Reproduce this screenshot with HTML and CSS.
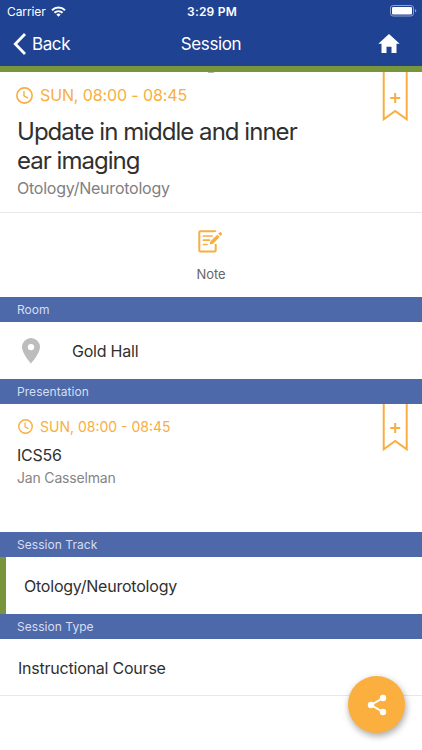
FILE: index.html
```html
<!DOCTYPE html>
<html lang="en">
<head>
  <meta charset="UTF-8">
  <meta name="viewport" content="width=device-width, initial-scale=1.0">
  <title>Session</title>
  <link rel="stylesheet" href="styles.css">
</head>
<body>
  <header class="header">
    <div class="status-bar">
      <div class="carrier">
        <span class="carrier-name">Carrier</span>
        <svg width="15" height="11" viewBox="0 0 15 11" fill="none" stroke="#fff" stroke-width="2">
          <path d="M1 4.2a9.4 9.4 0 0 1 13 0M3.4 6.8a6 6 0 0 1 8.2 0"/>
          <path d="M7.5 10.8L5.3 8.6a3.2 3.2 0 0 1 4.4 0z" fill="#fff" stroke="none"/>
        </svg>
      </div>
      <span class="clock">3:29 PM</span>
      <svg class="battery" width="27" height="12" viewBox="0 0 27 12">
        <rect x=".5" y=".5" width="23" height="10.5" rx="2.6" fill="none" stroke="#8fa1cd"/>
        <rect x="2" y="2" width="20" height="7.5" rx="1.2" fill="#fff"/>
        <path d="M25 4v3.6q1.3-.6 1.3-1.8T25 4z" fill="#8fa1cd"/>
      </svg>
    </div>
    <nav class="nav-bar">
      <a class="back">
        <svg width="14" height="22" viewBox="0 0 14 22" fill="none" stroke="#fff" stroke-width="2.8">
          <path d="M12 1L2.3 11 12 21"/>
        </svg>
        <span class="back-label">Back</span>
      </a>
      <span class="nav-title">Session</span>
      <svg class="home" width="22" height="19" viewBox="0 0 22 19" fill="#fff">
        <path d="M11 0l10.7 9.8h-3.2V19h-5v-6.3h-5V19h-5V9.8H.3z"/>
      </svg>
    </nav>
  </header>

  <main>
    <section class="session">
      <div class="time">
        <svg class="time-icon" viewBox="0 0 16 16" fill="none" stroke="#f8ae40" stroke-width="1.5">
          <circle cx="8" cy="8" r="7.2"/>
          <path d="M7.5 3.7v4.6l3.8 2.2" stroke-width="1.3"/>
        </svg>
        <span class="time-text">SUN, 08:00 - 08:45</span>
      </div>
      <h1 class="session-title">Update in middle and inner<br>ear imaging</h1>
      <p class="session-track">Otology/Neurotology</p>
      <svg class="bookmark" width="26" height="50" viewBox="0 0 26 50" fill="none" stroke="#f8ae40" stroke-width="2">
        <path d="M1.7 -2v49.4L13.2 39l11.5 8.4V-2M8.2 26h10M13.2 21v10"/>
      </svg>
    </section>

    <section class="note">
      <svg class="note-icon" width="25" height="23" viewBox="0 0 25 23" fill="none" stroke="#f8ae40" stroke-width="2">
        <path d="M17.5 2.1V2q0-.7-.8-.7H2.3q-1 0-1 1v18.2q0 1 1 1h14.4q1 0 1-1V14"/>
        <path d="M4.7 6h10M4.7 10.2h7.5M4.7 14.5h5" stroke-width="1.7"/>
        <path d="M11.6 14.5l1-3.6L19.3 4.7l2.4 2.4-6.5 6.6z" fill="#f8ae40" stroke="none"/>
        <path d="M20.2 3.8l1.3-1.3q.9-.8 1.7 0l.5.5q.8.9 0 1.7l-1.2 1.3z" fill="#f8ae40" stroke="none"/>
      </svg>
      <span class="note-label">Note</span>
    </section>

    <h2 class="bar">Room</h2>
    <div class="row room">
      <svg class="pin" width="18" height="26" viewBox="0 0 18 26">
        <path fill="#bdbdbd" fill-rule="evenodd" d="M9 0a9 9 0 0 0-9 9c0 6.5 9 16.5 9 16.5S18 15.5 18 9a9 9 0 0 0-9-9zm0 5.9a3.2 3.2 0 1 1 0 6.4 3.2 3.2 0 0 1 0-6.4z"/>
      </svg>
      <span class="room-name">Gold Hall</span>
    </div>

    <h2 class="bar">Presentation</h2>
    <section class="presentation">
      <div class="time time-small">
        <svg class="time-icon" viewBox="0 0 16 16" fill="none" stroke="#f8ae40" stroke-width="1.5">
          <circle cx="8" cy="8" r="7.2"/>
          <path d="M7.5 3.7v4.6l3.8 2.2" stroke-width="1.3"/>
        </svg>
        <span class="time-text">SUN, 08:00 - 08:45</span>
      </div>
      <h3 class="presentation-title">ICS56</h3>
      <p class="speaker">Jan Casselman</p>
      <svg class="bookmark bookmark-low" width="26" height="50" viewBox="0 0 26 50" fill="none" stroke="#f8ae40" stroke-width="2">
        <path d="M1.7 -2v49.4L13.2 39l11.5 8.4V-2M8.2 26h10M13.2 21v10"/>
      </svg>
    </section>

    <h2 class="bar">Session Track</h2>
    <div class="row track"><span class="track-name">Otology/Neurotology</span></div>

    <h2 class="bar">Session Type</h2>
    <div class="row type"><span class="type-name">Instructional Course</span></div>
  </main>

  <button class="share" aria-label="Share">
    <svg width="20" height="22" viewBox="0 0 20 22" fill="#fff">
      <path d="M16 4L4 11l12 7" fill="none" stroke="#fff" stroke-width="2"/>
      <circle cx="16" cy="4" r="3.2"/>
      <circle cx="4" cy="11" r="3.2"/>
      <circle cx="16" cy="18" r="3.2"/>
    </svg>
  </button>
</body>
</html>
```

FILE: styles.css
```css
* {
  box-sizing: border-box;
}

body {
  margin: 0;
  min-height: 750px;
  background: #fff;
  color: #303030;
  font-family: Inter, "Liberation Sans", sans-serif;
  overflow: hidden;
}

h1, h2, h3, p {
  margin: 0;
  font-weight: 400;
}

svg {
  display: block;
  flex: none;
}

.header {
  height: 72px;
  background: #1f4293;
  border-bottom: 6px solid #78953b;
  color: #fff;
}

.status-bar,
.nav-bar {
  display: grid;
  grid-template-columns: 1fr auto 1fr;
  align-items: center;
}

.status-bar {
  height: 22px;
  padding: 0 5px 0 7px;
  font-size: 12px;
}

.carrier {
  display: flex;
  align-items: center;
  gap: 5px;
}

.carrier-name {
  letter-spacing: -0.1px;
}

.clock {
  font-weight: 600;
  letter-spacing: 0.2px;
}

.battery,
.home {
  justify-self: end;
}

.nav-bar {
  height: 43px;
  padding: 0 22px 0 13px;
  font-size: 17px;
  letter-spacing: -0.4px;
}

.nav-title {
  padding-left: 9px;
}

.back {
  display: flex;
  align-items: center;
  gap: 5px;
}

.session {
  position: relative;
  height: 141px;
  padding: 12px 17px 0;
  border-bottom: 1px solid #e8e8e8;
}

/* small grey handle under the header */
.session::before {
  content: "";
  position: absolute;
  top: 0;
  left: 208px;
  width: 6px;
  height: 1px;
  background: #b5b8aa;
}

.time {
  display: flex;
  align-items: center;
  gap: 7px;
  height: 22px;
  margin-left: -1px;
  color: #f8ae40;
  font-size: 16px;
  letter-spacing: -0.12px;
}

.time-icon {
  width: 17px;
  height: 17px;
}

.session-title {
  margin-top: 11px;
  font-size: 24px;
  line-height: 29px;
  letter-spacing: -0.97px;
}

.session-track {
  margin-top: 3px;
  color: #808080;
  font-size: 16px;
  line-height: 20px;
  letter-spacing: -0.23px;
}

.bookmark {
  position: absolute;
  top: 0;
  right: 14px;
}

.bookmark-low {
  top: -2px;
}

.note {
  display: flex;
  flex-direction: column;
  align-items: center;
  gap: 13px;
  height: 84px;
  padding-top: 17px;
  color: #666;
  font-size: 13px;
  line-height: 16px;
}

.note-icon {
  margin-right: 1px;
}

.note-label {
  letter-spacing: -0.1px;
}

.bar {
  height: 25px;
  padding-left: 17px;
  background: #4d69a9;
  color: #d5def2;
  font-size: 12px;
  line-height: 25px;
  letter-spacing: 0.05px;
}

.row {
  display: flex;
  align-items: center;
  height: 57px;
  font-size: 16px;
  letter-spacing: -0.22px;
}

.room {
  gap: 32px;
  padding-left: 22px;
}

.presentation {
  position: relative;
  height: 128px;
  padding: 11px 17px 0;
  overflow: hidden;
}

.time-small {
  gap: 7px;
  margin-left: 1px;
  font-size: 14px;
  letter-spacing: 0;
}

.time-small .time-icon {
  width: 15px;
  height: 15px;
}

.presentation-title {
  margin-top: 8px;
  font-size: 16px;
  line-height: 20px;
  letter-spacing: -0.25px;
}

.speaker {
  margin-top: 4px;
  color: #858585;
  font-size: 14px;
  line-height: 18px;
  letter-spacing: -0.18px;
}

.track {
  padding-left: 18px;
  border-left: 6px solid #78953b;
}

.type {
  padding: 1px 0 0 18px;
  border-bottom: 1px solid #e8e8e8;
}

.share {
  position: absolute;
  top: 676px;
  left: 348px;
  display: flex;
  align-items: center;
  justify-content: center;
  width: 57px;
  height: 57px;
  padding: 0;
  border: 0;
  border-radius: 50%;
  background: #fbaf3f;
  box-shadow: 1px 3px 7px rgba(0, 0, 0, 0.35);
}
```
